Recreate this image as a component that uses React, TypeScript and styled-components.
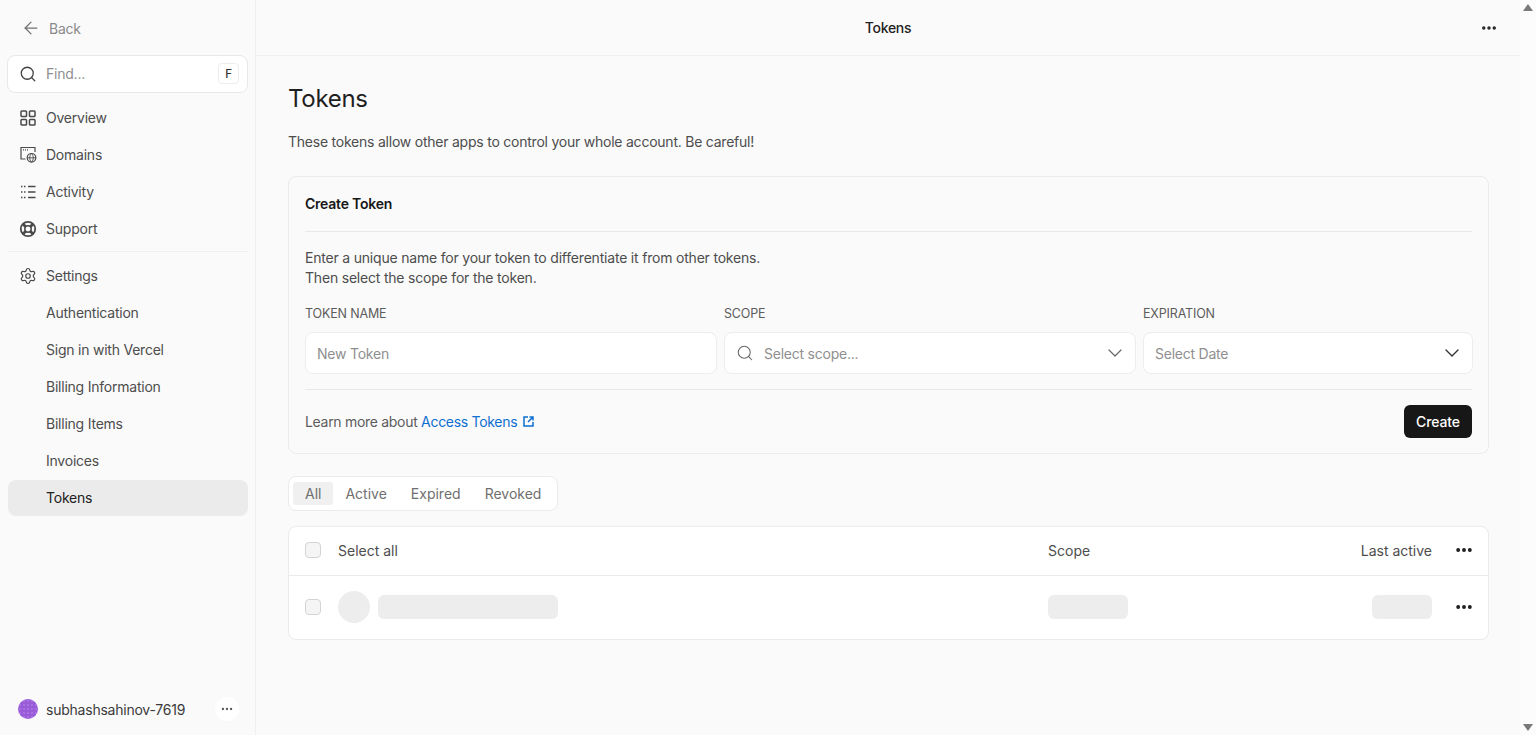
import React from "react";
import styled, { createGlobalStyle } from "styled-components";
import { ArrowLeft, Search, ChevronDown, Ellipsis, Settings } from "lucide-react";

const Global = createGlobalStyle`
  html, body { margin: 0; padding: 0; height: 100%; overflow: hidden; background: #fafafa; }
  body { font-family: Inter, "Liberation Sans", sans-serif; color: #4d4d4d; font-size: 14px; letter-spacing: -0.23px; }
  * { box-sizing: border-box; }
`;

const Shell = styled.div`
  display: flex;
  height: 735px;
  width: 1536px;
  background: #fafafa;
`;

const Sidebar = styled.aside`
  width: 256px;
  flex: none;
  border-right: 1px solid #efefef;
  padding: 0 7px 8px 8px;
  display: flex;
  flex-direction: column;
`;

const BackRow = styled.div`
  height: 55px;
  display: flex;
  align-items: center;
  gap: 8px;
  padding-left: 13px;
  padding-top: 1px;
  color: #8a8a8a;
  font-size: 14px;
  svg { color: #6f6f6f; }
`;

const SearchBox = styled.div`
  height: 38px;
  background: #fff;
  border: 1px solid #e8e8e8;
  border-radius: 8px;
  display: flex;
  align-items: center;
  padding: 0 8px 1px 11px;
  gap: 9px;
  color: #8f8f8f;
  margin: 0 0 6px -1px;
  width: 241px;
`;

const Grow = styled.span`
  flex: 1;
`;

const Kbd = styled.span`
  width: 21px;
  height: 21px;
  border: 1px solid #ededed;
  border-radius: 4px;
  display: flex;
  align-items: center;
  justify-content: center;
  font-size: 11.500px;
  font-weight: 500;
  color: #333;
`;

const NavItem = styled.div<{ $active?: boolean; $sub?: boolean }>`
  height: ${(p) => (p.$active ? 36 : 37)}px;
  margin-top: ${(p) => (p.$active ? 1 : 0)}px;
  padding-bottom: ${(p) => (p.$active ? 2 : 0)}px;
  width: 240px;
  flex: none;
  display: flex;
  align-items: center;
  gap: 9px;
  padding-left: ${(p) => (p.$sub ? 38 : 11)}px;
  border-radius: 8px;
  font-size: 14px;
  color: ${(p) => (p.$active ? "#222" : "#4d4d4d")};
  background: ${(p) => (p.$active ? "#ebebeb" : "transparent")};
`;

const IconSlot = styled.span`
  width: 18px;
  height: 18px;
  flex: none;
  display: flex;
  align-items: center;
  justify-content: center;
  color: #4a4a4a;
`;

const SideDivider = styled.div`
  height: 1px;
  width: 240px;
  background: #efefef;
  margin: 4px 0 5px;
`;

const UserRow = styled.div`
  margin-top: auto;
  height: 36px;
  display: flex;
  align-items: center;
  padding: 0 9px 0 10px;
  gap: 8px;
  font-size: 14px;
  color: #3a3a3a;
  width: 240px;
`;

const Avatar = styled.div`
  width: 20px;
  height: 20px;
  border-radius: 50%;
  background-color: #9a5bd8;
  background-image: radial-gradient(circle, #a873e0 1px, transparent 1.200px);
  background-size: 4px 4px;
`;

const RoundButton = styled.div`
  width: 24px;
  height: 24px;
  border-radius: 50%;
  background: #fff;
  display: flex;
  align-items: center;
  justify-content: center;
  color: #555;
`;

const Main = styled.main`
  flex: 1;
  min-width: 0;
  display: flex;
  flex-direction: column;
`;

const TopBar = styled.header`
  height: 56px;
  flex: none;
  border-bottom: 1px solid #efefef;
  display: flex;
  align-items: center;
  justify-content: center;
  position: relative;
  font-size: 14px;
  font-weight: 500;
  color: #222;
  letter-spacing: -0.3px;
`;

const TopMenu = styled.span`
  position: absolute;
  right: 22px;
  top: 19px;
  color: #222;
  display: flex;
`;

const Content = styled.div`
  padding: 0 31px 0 32px;
  display: flex;
  flex-direction: column;
`;

const Title = styled.h1`
  margin: 26px 0 0;
  height: 34px;
  line-height: 34px;
  font-size: 24px;
  font-weight: 400;
  letter-spacing: -0.3px;
  color: #1f1f1f;
`;

const Intro = styled.p`
  margin: 16px 0 0;
  line-height: 20px;
  color: #4d4d4d;
`;

const Card = styled.section`
  margin-top: 24px;
  height: 278px;
  border: 1px solid #ebebeb;
  border-radius: 8px;
  padding: 0 16px;
  display: flex;
  flex-direction: column;
`;

const CardTitle = styled.h2`
  margin: 0;
  height: 55px;
  flex: none;
  display: flex;
  align-items: center;
  padding-bottom: 2px;
  font-size: 14px;
  font-weight: 600;
  color: #171717;
  border-bottom: 1px solid #e8e8e8;
`;

const CardText = styled.p`
  margin: 16px 0 0;
  line-height: 20px;
  color: #4d4d4d;
  letter-spacing: -0.2px;
`;

const Fields = styled.div`
  display: grid;
  grid-template-columns: 412px 412px 330px;
  column-gap: 7px;
  margin-top: 18px;
  padding-bottom: 15px;
  border-bottom: 1px solid #e8e8e8;
`;

const Field = styled.div`
  display: flex;
  flex-direction: column;
  gap: 11px;
`;

const Label = styled.label`
  font-size: 12.500px;
  line-height: 15px;
  height: 15px;
  color: #5c5c5c;
  letter-spacing: -0.15px;
`;

const InputBox = styled.div`
  height: 42px;
  background: #fff;
  border: 1px solid #ededed;
  border-radius: 8px;
  display: flex;
  align-items: center;
  padding: 0 8px 0 11px;
  gap: 10px;
  color: #8f8f8f;
  font-size: 14px;
`;

const CardFooter = styled.div`
  display: flex;
  align-items: center;
  justify-content: space-between;
  margin-top: 15px;
`;

const Learn = styled.div`
  display: flex;
  align-items: center;
  gap: 6px;
  color: #5c5c5c;
  letter-spacing: -0.3px;
`;

const DocLink = styled.a`
  color: #0d6fd0;
`;

const CreateButton = styled.button`
  width: 68px;
  height: 33px;
  border: 0;
  border-radius: 6px;
  background: #171717;
  color: #fff;
  font: 500 14px Inter, sans-serif;
  letter-spacing: -0.1px;
`;

const Tabs = styled.div`
  margin-top: 22px;
  width: 270px;
  height: 35px;
  background: #fff;
  border: 1px solid #ebebeb;
  border-radius: 8px;
  display: flex;
  align-items: center;
  padding-left: 4px;
`;

const Tab = styled.div<{ $active?: boolean }>`
  height: 23px;
  padding: 0 12px;
  display: flex;
  align-items: center;
  border-radius: 3px;
  background: ${(p) => (p.$active ? "#f0f0f0" : "transparent")};
  color: #6f6f6f;
  font-size: 14px;
  letter-spacing: 0;
`;

const Table = styled.section`
  margin-top: 15px;
  background: #fff;
  border: 1px solid #ebebeb;
  border-radius: 8px;
`;

const Row = styled.div<{ $head?: boolean }>`
  height: ${(p) => (p.$head ? 49 : 63)}px;
  display: grid;
  grid-template-columns: 33px 710px 1fr 94px 42px;
  align-items: center;
  padding: 0 14px 2px 16px;
  color: #4d4d4d;
  border-bottom: ${(p) => (p.$head ? "1px solid #ebebeb" : "0")};
  font-size: 14px;
  letter-spacing: 0;
`;

const Check = styled.div`
  width: 16px;
  height: 16px;
  border: 1px solid #d4d4d4;
  border-radius: 4px;
  background: #f5f5f5;
`;

const NameCell = styled.div`
  display: flex;
  align-items: center;
  gap: 8px;
`;

const EndCell = styled.div`
  display: flex;
  justify-content: flex-end;
`;

const MenuCell = styled.div`
  display: flex;
  justify-content: flex-end;
  color: #171717;
`;

const Skeleton = styled.div<{ $w: number }>`
  width: ${(p) => p.$w}px;
  height: 24px;
  border-radius: 6px;
  background: #ededed;
`;

const SkeletonCircle = styled.div`
  width: 32px;
  height: 32px;
  border-radius: 50%;
  background: #ededed;
`;

const ScrollBar = styled.div`
  width: 16px;
  flex: none;
  background: #fcfcfc;
  display: flex;
  flex-direction: column;
  justify-content: space-between;
  align-items: center;
  padding: 4px 0;
`;

const Arrow = styled.div<{ $down?: boolean }>`
  width: 0;
  height: 0;
  border-left: 5px solid transparent;
  border-right: 5px solid transparent;
  ${(p) => (p.$down ? "border-top: 7px solid #7a7a7a;" : "border-bottom: 7px solid #7a7a7a;")}
`;

const OverviewIcon = () => (
  <svg width="16" height="16" viewBox="0 0 16 16" fill="none" stroke="currentColor" strokeWidth="1.500">
    <rect x="1" y="1" width="5.500" height="5.500" rx="0.800" />
    <rect x="9.500" y="1" width="5.500" height="5.500" rx="0.800" />
    <rect x="1" y="9.500" width="5.500" height="5.500" rx="0.800" />
    <rect x="9.500" y="9.500" width="5.500" height="5.500" rx="0.800" />
  </svg>
);

const DomainsIcon = () => (
  <svg width="17" height="17" viewBox="0 0 17 17" fill="none" stroke="currentColor" strokeWidth="1.200">
    <path d="M5.500 13H1V1.500h14V6" />
    <path d="M3 3.800h1M5 3.800h1M7 3.800h1" />
    <circle cx="11.500" cy="11.800" r="4.300" />
    <path d="M7.200 11.800h8.600M11.500 7.500c-2.400 2.400-2.400 6.200 0 8.600M11.500 7.500c2.400 2.400 2.400 6.200 0 8.600" strokeWidth="0.900" />
  </svg>
);

const ActivityIcon = () => (
  <svg width="16" height="16" viewBox="0 0 16 16" fill="none" stroke="currentColor" strokeWidth="1.300">
    <path d="M1 2.500h1.500M4 2.500h1.500M1 8h1.500M4 8h1.500M1 13.500h1.500M4 13.500h1.500M8 2.500H15.500M8 8H15.500M8 13.500H15.500" />
  </svg>
);

const SupportIcon = () => (
  <svg width="18" height="18" viewBox="0 0 18 18" fill="none" stroke="currentColor">
    <circle cx="9" cy="9" r="7.200" strokeWidth="1.800" />
    <circle cx="9" cy="9" r="3.200" strokeWidth="1.500" />
    <path d="M4 4l2.700 2.700M14 4l-2.700 2.700M4 14l2.700-2.700M14 14l-2.700-2.700" strokeWidth="2.800" />
  </svg>
);

const ExternalIcon = () => (
  <svg width="11" height="11" viewBox="0 0 11 11" fill="none" stroke="#0d6fd0" strokeWidth="1.500">
    <path d="M5 1H1v9h9V6" />
    <path d="M6.500 1H10v3.500M10 1 5 6" />
  </svg>
);

const Dots = ({ size = 20 }: { size?: number }) => <Ellipsis size={size} strokeWidth={2.600} />;

const subItems = ["Authentication", "Sign in with Vercel", "Billing Information", "Billing Items", "Invoices"];

export default function App() {
  return (
    <Shell>
      <Global />
      <Sidebar>
        <BackRow>
          <ArrowLeft size={20} strokeWidth={1.500} />
          <span>Back</span>
        </BackRow>
        <SearchBox>
          <Search size={18} strokeWidth={1.700} color="#444" />
          <Grow>Find...</Grow>
          <Kbd>F</Kbd>
        </SearchBox>
        <NavItem>
          <IconSlot>
            <OverviewIcon />
          </IconSlot>
          Overview
        </NavItem>
        <NavItem>
          <IconSlot>
            <DomainsIcon />
          </IconSlot>
          Domains
        </NavItem>
        <NavItem>
          <IconSlot>
            <ActivityIcon />
          </IconSlot>
          Activity
        </NavItem>
        <NavItem>
          <IconSlot>
            <SupportIcon />
          </IconSlot>
          Support
        </NavItem>
        <SideDivider />
        <NavItem>
          <IconSlot>
            <Settings size={18} strokeWidth={1.600} />
          </IconSlot>
          Settings
        </NavItem>
        {subItems.map((s) => (
          <NavItem key={s} $sub>
            {s}
          </NavItem>
        ))}
        <NavItem $sub $active>
          Tokens
        </NavItem>
        <UserRow>
          <Avatar />
          <Grow>subhashsahinov-7619</Grow>
          <RoundButton>
            <Ellipsis size={14} strokeWidth={2} />
          </RoundButton>
        </UserRow>
      </Sidebar>
      <Main>
        <TopBar>
          Tokens
          <TopMenu>
            <Dots size={18} />
          </TopMenu>
        </TopBar>
        <Content>
          <Title>Tokens</Title>
          <Intro>These tokens allow other apps to control your whole account. Be careful!</Intro>
          <Card>
            <CardTitle>Create Token</CardTitle>
            <CardText>
              Enter a unique name for your token to differentiate it from other tokens.
              <br />
              Then select the scope for the token.
            </CardText>
            <Fields>
              <Field>
                <Label>TOKEN NAME</Label>
                <InputBox>New Token</InputBox>
              </Field>
              <Field>
                <Label>SCOPE</Label>
                <InputBox>
                  <Search size={18} strokeWidth={1.400} color="#666" />
                  <Grow>Select scope...</Grow>
                  <ChevronDown size={24} strokeWidth={1.200} color="#666" />
                </InputBox>
              </Field>
              <Field>
                <Label>EXPIRATION</Label>
                <InputBox>
                  <Grow>Select Date</Grow>
                  <ChevronDown size={24} strokeWidth={1.400} color="#333" />
                </InputBox>
              </Field>
            </Fields>
            <CardFooter>
              <Learn>
                <span>
                  Learn more about <DocLink>Access Tokens</DocLink>
                </span>
                <ExternalIcon />
              </Learn>
              <CreateButton>Create</CreateButton>
            </CardFooter>
          </Card>
          <Tabs>
            <Tab $active>All</Tab>
            <Tab>Active</Tab>
            <Tab>Expired</Tab>
            <Tab>Revoked</Tab>
          </Tabs>
          <Table>
            <Row $head>
              <Check />
              <span>Select all</span>
              <span>Scope</span>
              <EndCell>Last active</EndCell>
              <MenuCell>
                <Dots />
              </MenuCell>
            </Row>
            <Row>
              <Check />
              <NameCell>
                <SkeletonCircle />
                <Skeleton $w={180} />
              </NameCell>
              <Skeleton $w={80} />
              <EndCell>
                <Skeleton $w={60} />
              </EndCell>
              <MenuCell>
                <Dots />
              </MenuCell>
            </Row>
          </Table>
        </Content>
      </Main>
      <ScrollBar>
        <Arrow />
        <Arrow $down />
      </ScrollBar>
    </Shell>
  );
}
